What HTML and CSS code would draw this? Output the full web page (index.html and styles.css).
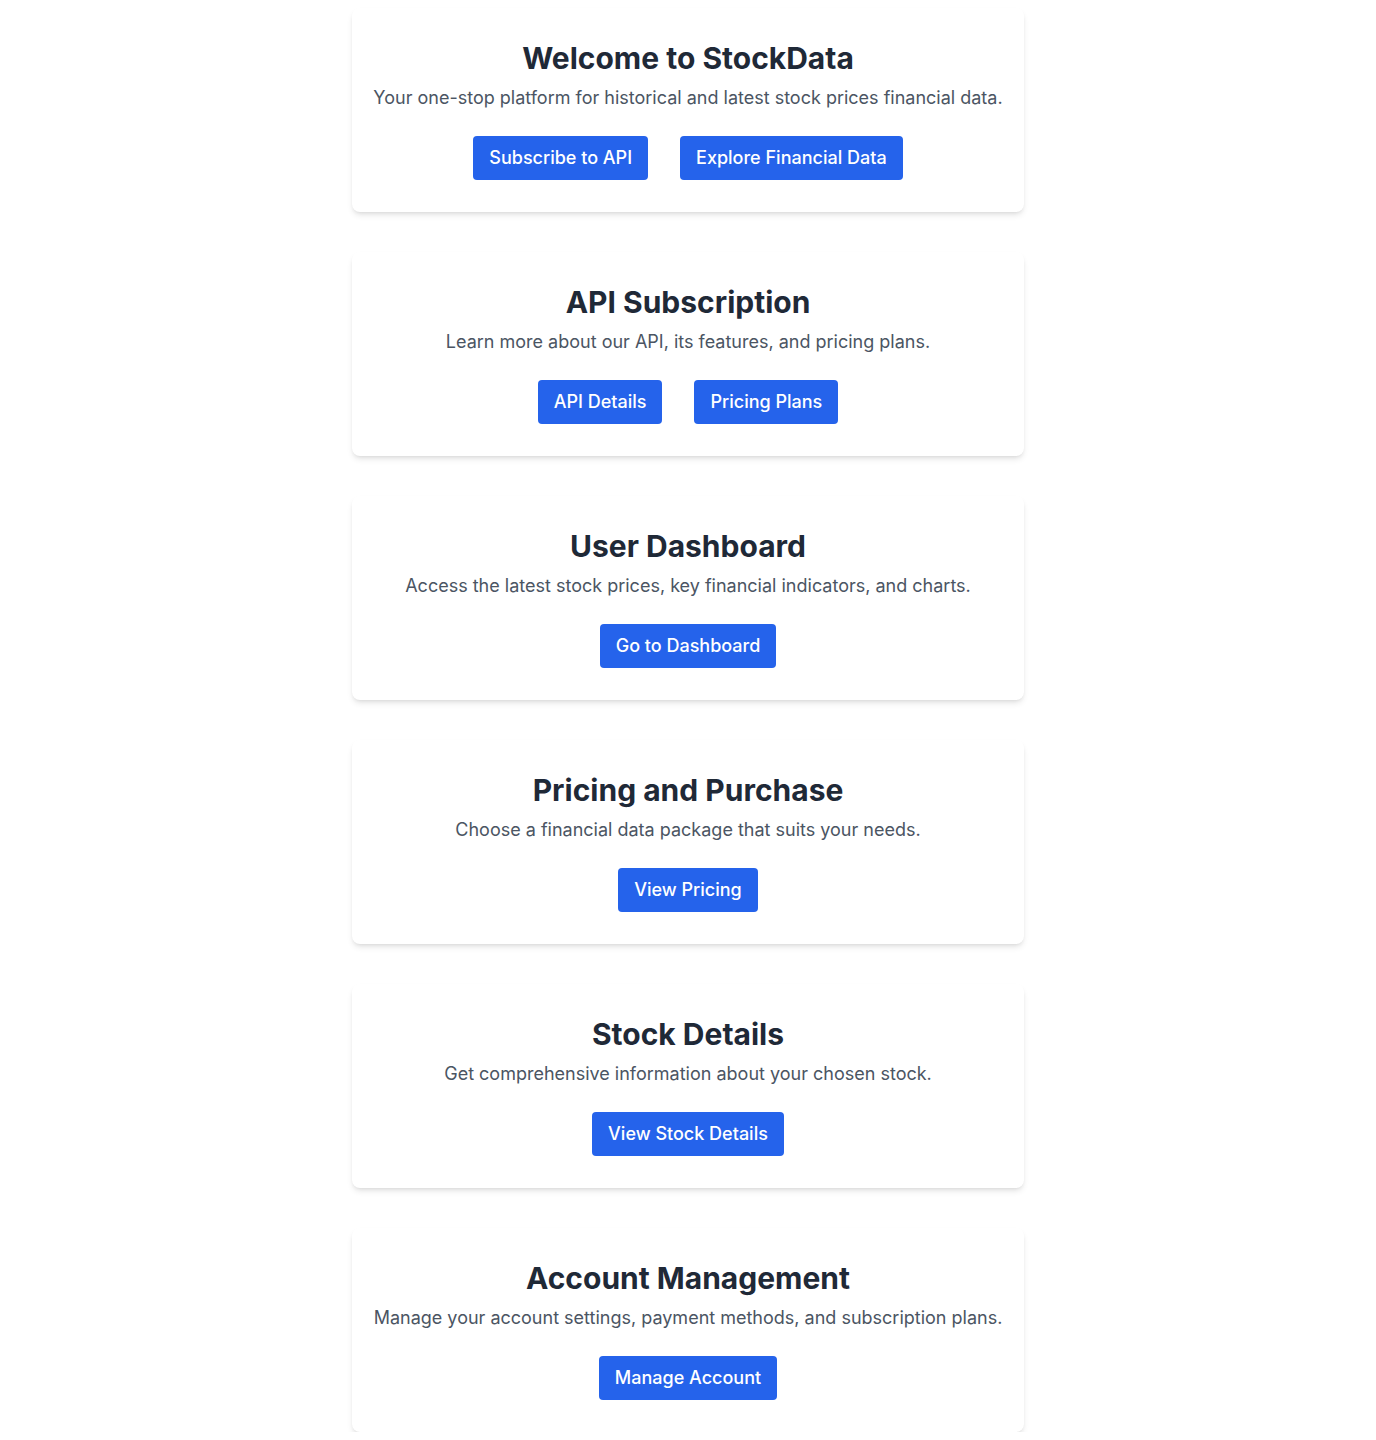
FILE: index.html
```html
<!DOCTYPE html>
<html lang="en">
<head>
<meta charset="utf-8">
<title>StockData</title>
<link rel="stylesheet" href="styles.css">
</head>
<body>
<main class="container">
  <section class="card">
    <h1 class="title">Welcome to StockData</h1>
    <p class="desc">Your one-stop platform for historical and latest stock prices financial data.</p>
    <div class="actions">
      <a class="btn" href="#">Subscribe to API</a>
      <a class="btn" href="#">Explore Financial Data</a>
    </div>
  </section>
  <section class="card">
    <h2 class="title">API Subscription</h2>
    <p class="desc">Learn more about our API, its features, and pricing plans.</p>
    <div class="actions">
      <a class="btn" href="#">API Details</a>
      <a class="btn" href="#">Pricing Plans</a>
    </div>
  </section>
  <section class="card">
    <h2 class="title">User Dashboard</h2>
    <p class="desc">Access the latest stock prices, key financial indicators, and charts.</p>
    <div class="actions">
      <a class="btn" href="#">Go to Dashboard</a>
    </div>
  </section>
  <section class="card">
    <h2 class="title">Pricing and Purchase</h2>
    <p class="desc">Choose a financial data package that suits your needs.</p>
    <div class="actions">
      <a class="btn" href="#">View Pricing</a>
    </div>
  </section>
  <section class="card">
    <h2 class="title">Stock Details</h2>
    <p class="desc">Get comprehensive information about your chosen stock.</p>
    <div class="actions">
      <a class="btn" href="#">View Stock Details</a>
    </div>
  </section>
  <section class="card">
    <h2 class="title">Account Management</h2>
    <p class="desc">Manage your account settings, payment methods, and subscription plans.</p>
    <div class="actions">
      <a class="btn" href="#">Manage Account</a>
    </div>
  </section>
</main>
</body>
</html>
```
FILE: styles.css
```css
* { box-sizing: border-box; }
html, body { margin: 0; padding: 0; background: #ffffff; }
body {
  font-family: Inter, "Noto Sans", sans-serif;
  color: #1f2937;
}
.container {
  max-width: 672px;
  margin: 0 auto;
  padding-top: 8px;
  display: flex;
  flex-direction: column;
  gap: 40px;
}
.card {
  background: #ffffff;
  border-radius: 8px;
  box-shadow: 0 4px 6px -1px rgba(0,0,0,0.1), 0 2px 4px -2px rgba(0,0,0,0.1);
  padding: 32px 16px;
  text-align: center;
}
.title {
  margin: 0 0 8px;
  font-size: 30px;
  line-height: 36px;
  font-weight: 700;
  color: #1f2937;
}
.desc {
  margin: 0 0 24px;
  font-size: 18px;
  line-height: 28px;
  color: #4b5563;
}
.actions {
  display: flex;
  justify-content: center;
  gap: 32px;
}
.btn {
  display: inline-block;
  background: #2563eb;
  color: #ffffff;
  text-decoration: none;
  font-size: 18px;
  line-height: 28px;
  font-weight: 500;
  padding: 8px 16px;
  border-radius: 4px;
}
```
